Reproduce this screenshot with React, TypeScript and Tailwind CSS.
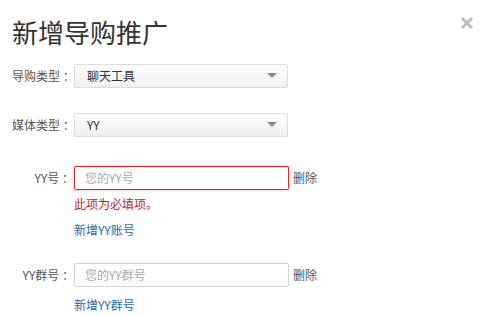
import React from "react";

const font = { fontFamily: '"Noto Sans CJK SC", "Noto Sans", sans-serif' };

const Label: React.FC<{ children: React.ReactNode }> = ({ children }) => {
    return (
        <div className="w-[62px] shrink-0 text-right text-[12px] text-[#555] whitespace-nowrap">
            {children}
        </div>
    );
};

const SelectBox: React.FC<{ value: string }> = ({ value }) => {
    return (
        <div className="w-[214px] h-[24px] border border-[#dcdcdc] rounded-[2px] bg-gradient-to-b from-white to-[#efefef] flex items-center justify-between pl-[12px] pr-[10px] text-[12px] text-[#333]">
            <span>{value}</span>
            <svg width="10" height="6" viewBox="0 0 10 6">
                <path d="M0 0 L10 0 L5 5 Z" fill="#8a8a8a" />
            </svg>
        </div>
    );
};

const InputBox: React.FC<{ placeholder: string; error?: boolean }> = ({ placeholder, error }) => {
    return (
        <div
            className={
                error
                    ? "w-[215px] h-[24px] border border-[#c9302c] rounded-[2px] shadow-[0_0_3px_rgba(201,48,44,0.45)] bg-white flex items-center pl-[10px] text-[12px] text-[#aaa]"
                    : "w-[215px] h-[24px] border border-[#d4d4d4] rounded-[2px] bg-white flex items-center pl-[10px] text-[12px] text-[#aaa]"
            }
        >
            {placeholder}
        </div>
    );
};

export default function App() {
    return (
        <div style={font} className="w-[479px] h-[316px] bg-white relative overflow-hidden pl-[12px]">
            {/* close button */}
            <div className="absolute left-[460px] top-[16px]">
                <svg width="14" height="14" viewBox="0 0 14 14">
                    <path d="M2 2 L12 12 M12 2 L2 12" stroke="#bdbdbd" strokeWidth="3" />
                </svg>
            </div>

            <div className="mt-[16px] h-[32px] leading-[32px] text-[26px] text-[#333]">新增导购推广</div>

            <div className="mt-[16px] flex items-center">
                <Label>导购类型 ：</Label>
                <SelectBox value="聊天工具" />
            </div>

            <div className="mt-[25px] flex items-center">
                <Label>媒体类型 ：</Label>
                <SelectBox value="YY" />
            </div>

            <div className="mt-[29px] flex items-center">
                <Label>YY号 ：</Label>
                <InputBox placeholder="您的YY号" error />
                <span className="ml-[4px] text-[12px] text-[#555]">删除</span>
            </div>
            <div className="ml-[62px] mt-[6px] h-[16px] leading-[16px] text-[12px] text-[#b3292a]">此项为必填项。</div>
            <div className="ml-[62px] mt-[10px] h-[16px] leading-[16px] text-[12px] text-[#2a6aa0]">新增YY账号</div>

            <div className="mt-[25px] flex items-center">
                <Label>YY群号 ：</Label>
                <InputBox placeholder="您的YY群号" />
                <span className="ml-[4px] text-[12px] text-[#555]">删除</span>
            </div>
            <div className="ml-[62px] mt-[10px] h-[16px] leading-[16px] text-[12px] text-[#2a6aa0]">新增YY群号</div>
        </div>
    );
}
